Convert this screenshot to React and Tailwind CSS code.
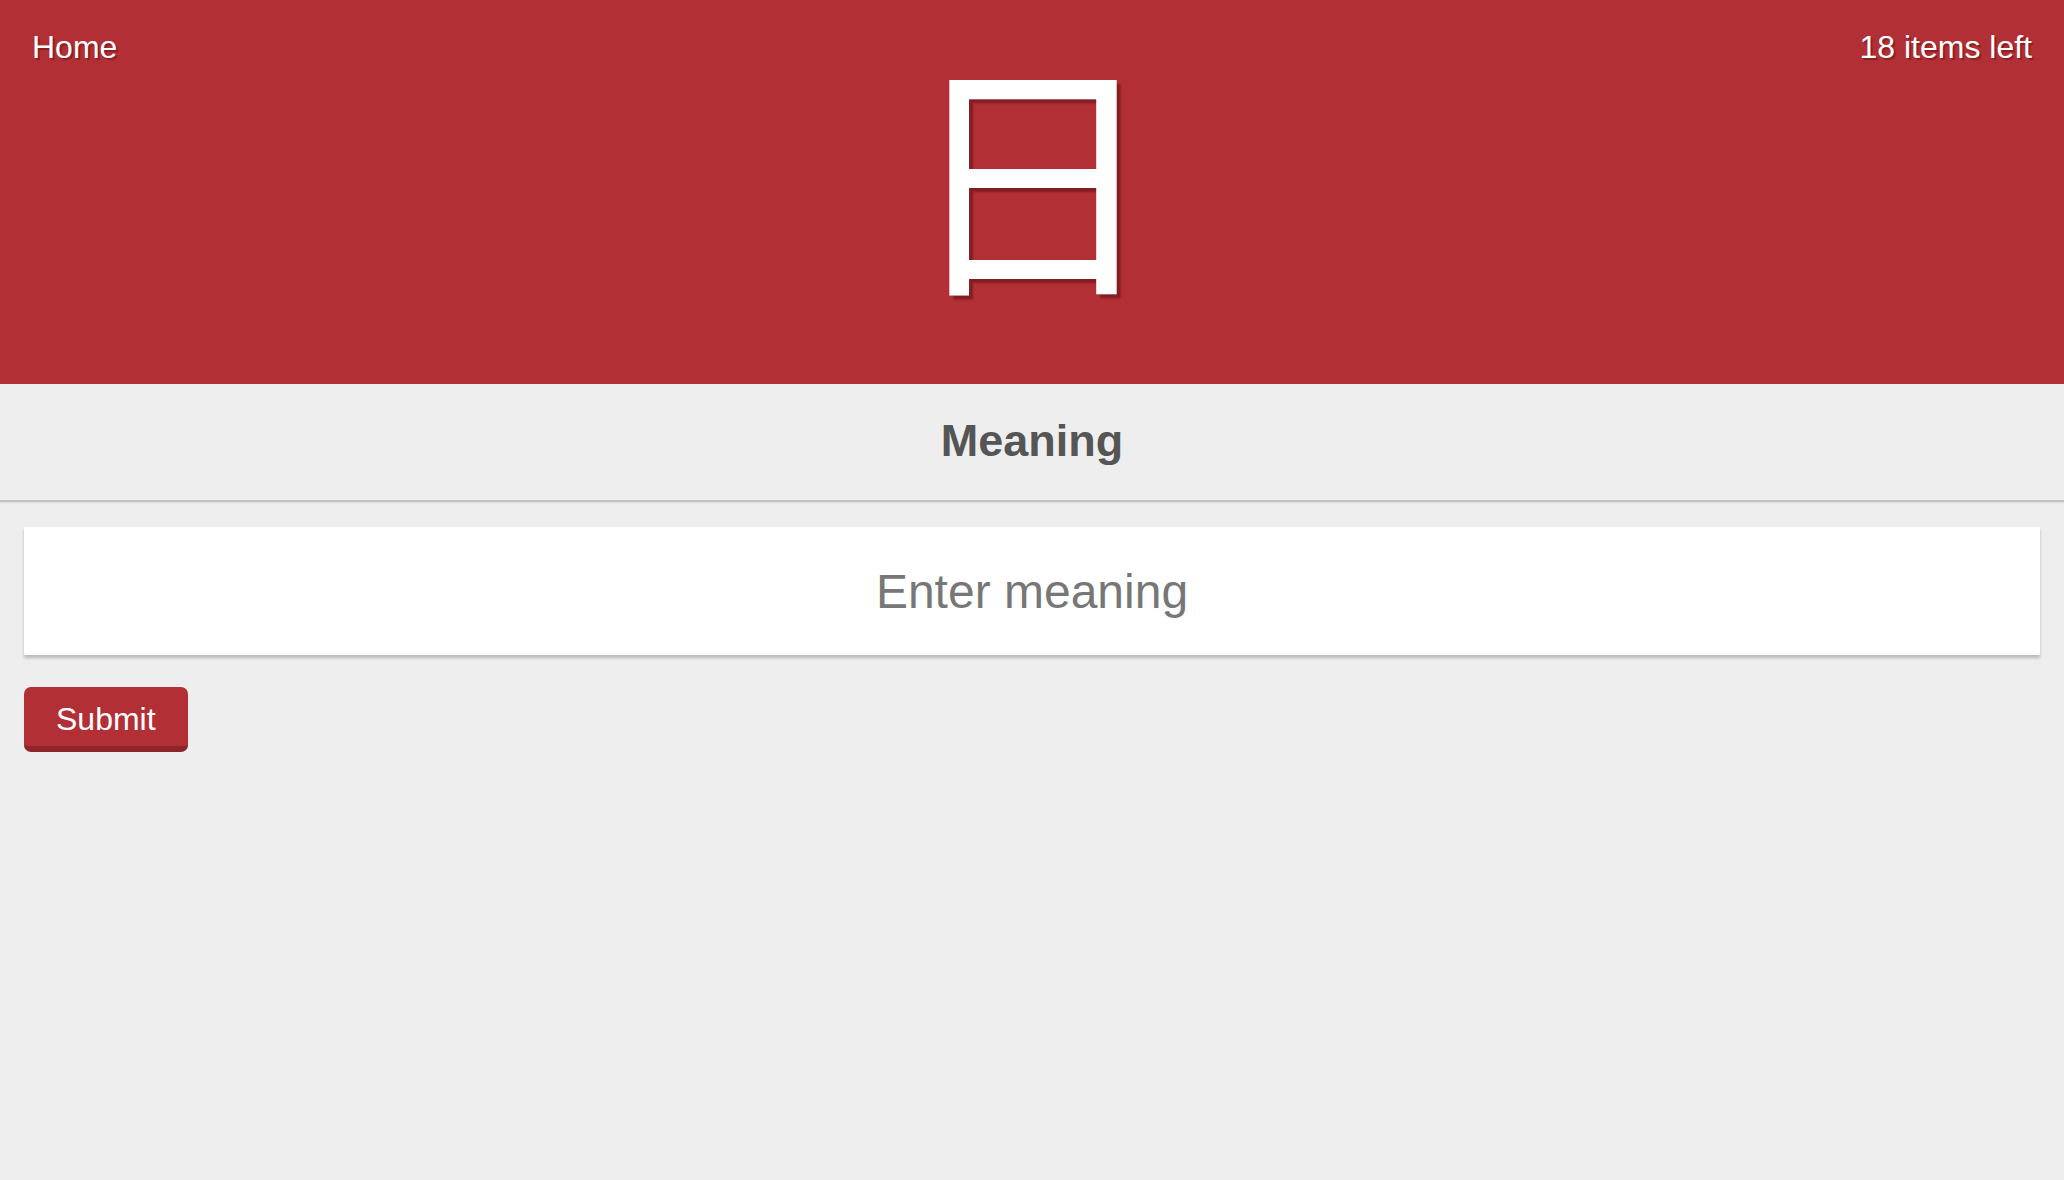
export default function App() {
  return (
    <div className="min-h-[1180px] bg-[#eeeeee]" style={{ fontFamily: '"Liberation Sans", Arial, sans-serif' }}>
      <header className="h-[384px] bg-[#b23035] grid grid-cols-[1fr_auto_1fr] items-start px-[32px]">
        <div className="pt-[29px] text-[32px] leading-[36px] text-white [text-shadow:2px_2px_1px_rgba(110,20,25,0.6)]">
          Home
        </div>
        <div
          className="text-white text-[255px] leading-[1.2] pt-[13px] [text-shadow:4px_4px_2px_rgba(120,25,30,0.8)]"
          style={{ fontFamily: '"Noto Sans CJK JP", "Noto Sans CJK SC", sans-serif' }}
        >
          日
        </div>
        <div className="pt-[29px] text-right text-[32px] leading-[36px] text-white [text-shadow:2px_2px_1px_rgba(110,20,25,0.6)]">
          18 items left
        </div>
      </header>
      <div className="h-[118px] bg-[#eeeeee] border-b-2 border-[#c2c2c2] shadow-[0_1px_2px_rgba(0,0,0,0.08)] flex items-center justify-center">
        <h2 className="text-[45px] font-bold text-[#555555] -mt-[2px]">Meaning</h2>
      </div>
      <div className="px-[24px] pt-[25px]">
        <input
          type="text"
          placeholder="Enter meaning"
          className="w-full h-[128px] bg-white text-center text-[48px] text-[#555] placeholder:text-[#777777] outline-none shadow-[0_3px_3px_rgba(0,0,0,0.22)]"
          style={{ fontFamily: '"Liberation Sans", Arial, sans-serif' }}
        />
        <button
          className="mt-[32px] h-[65px] px-[32px] bg-[#b23035] text-white text-[32px] rounded-[7px] border-b-[6px] border-[#8e252a] leading-none pt-[4px]"
          style={{ fontFamily: '"Liberation Sans", Arial, sans-serif' }}
        >
          Submit
        </button>
      </div>
    </div>
  );
}
